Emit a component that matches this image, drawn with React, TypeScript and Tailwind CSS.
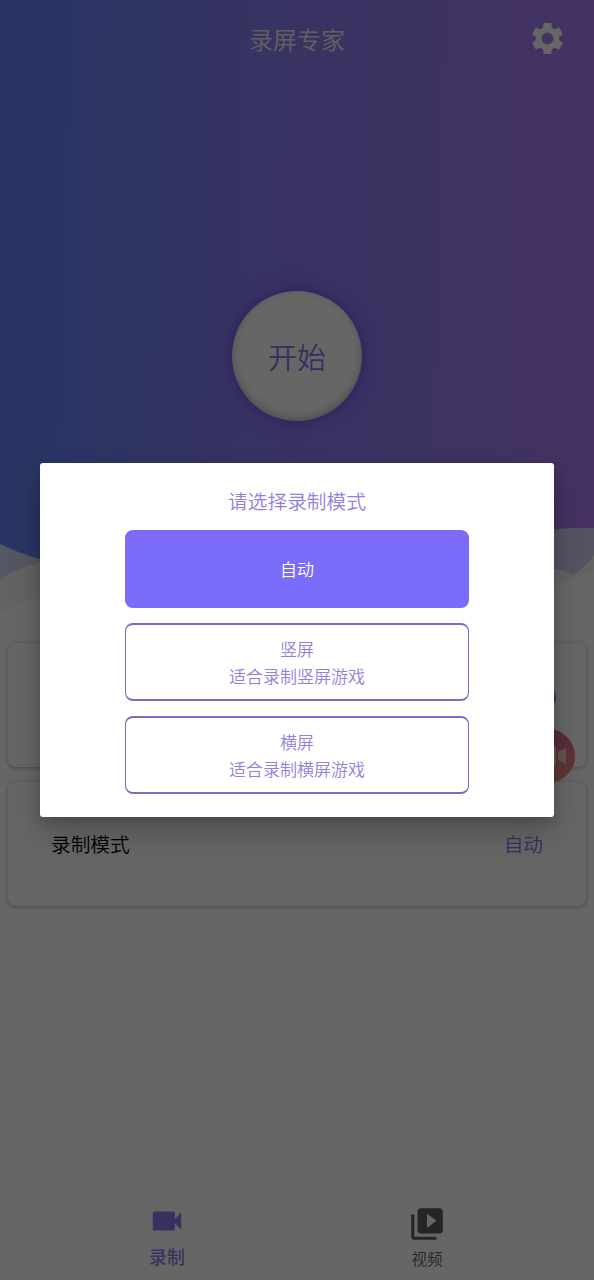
import type { ReactNode } from 'react';
import { MdSettings, MdVideocam, MdVideoLibrary } from 'react-icons/md';
import clsx from 'clsx';

interface Mode {
  id: string;
  title: string;
  hint?: string;
}

const modes: Mode[] = [
  { id: 'auto', title: '自动' },
  { id: 'portrait', title: '竖屏', hint: '适合录制竖屏游戏' },
  { id: 'landscape', title: '横屏', hint: '适合录制横屏游戏' },
];

function Backdrop() {
  return (
    <svg className="absolute inset-x-0 top-0" width="594" height="640" viewBox="0 0 594 640">
      <defs>
        <linearGradient id="sky" gradientUnits="userSpaceOnUse" x1="0" y1="0" x2="594" y2="16">
          <stop offset="0" stopColor="#6886f8" />
          <stop offset="0.2" stopColor="#7084f8" />
          <stop offset="0.42" stopColor="#8980f8" />
          <stop offset="0.7" stopColor="#977ff6" />
          <stop offset="1" stopColor="#ac7ef6" />
        </linearGradient>
        <linearGradient id="haze" x1="0" y1="0" x2="1" y2="0">
          <stop offset="0" stopColor="#cfd7f8" />
          <stop offset="1" stopColor="#d8cdf5" />
        </linearGradient>
      </defs>
      <path d="M0 544C22 554 40 559 70 562C200 575 420 528 594 528V600H0Z" fill="url(#haze)" />
      <path d="M0 0H594V528C555 527 520 533 480 540C300 575 120 580 40 559Q18 553 0 544Z" fill="url(#sky)" />
      <path d="M0 578Q20 568 40 562C120 540 500 545 555 569Q565 570 573 575Q586 567 594 555V640H0Z" fill="#f4f4f8" />
      <path d="M0 612Q20 602 40 598C200 560 480 610 555 584Q575 578 594 570V640H0Z" fill="#ffffff" />
    </svg>
  );
}

function Card({ label, value, className }: { label: string; value: string; className?: string }) {
  return (
    <div
      className={clsx(
        'mx-2 flex h-[124px] items-center justify-between rounded-lg bg-white pl-[43px] text-[19.7px] shadow-[0_1px_4px_rgba(0,0,0,0.3)]',
        className,
      )}
    >
      <span className="text-black">{label}</span>
      <span className="text-[#8a74ee]">{value}</span>
    </div>
  );
}

function Tab({ icon, label, active }: { icon: ReactNode; label: string; active?: boolean }) {
  return (
    <div
      className={clsx(
        'flex w-[260px] flex-col items-center',
        active ? 'pt-[9px] text-[#957bf0]' : 'pt-3 text-[#5c5c5c]',
      )}
    >
      {icon}
      <span className={clsx('whitespace-nowrap', active ? 'text-lg leading-[33px] font-medium' : 'text-[15.5px] leading-[30px]')}>
        {label}
      </span>
    </div>
  );
}

function ModeButton({ mode, selected }: { mode: Mode; selected: boolean }) {
  return (
    <button
      className={clsx(
        'flex h-[78px] w-[344px] flex-col items-center justify-center rounded-lg border-x-[1.5px] border-y-2 text-[17px] leading-[26px]',
        selected ? 'border-[#7a6bf8] bg-[#7a6bf8] text-white' : 'border-[#7b69cb] bg-white text-[#947fdd]',
      )}
    >
      <span>{mode.title}</span>
      {mode.hint && <span className="-mb-px pt-px">{mode.hint}</span>}
    </button>
  );
}

export default function App() {
  return (
    <div className="relative flex h-[1280px] w-[594px] flex-col overflow-hidden bg-white font-['Noto_Sans_CJK_SC',sans-serif] font-[350]">
      <Backdrop />

      <header className="relative grid h-20 grid-cols-[1fr_auto_1fr] items-center">
        <h1 className="col-start-2 pb-[3px] text-[24px] text-[#f0f0f0]">录屏专家</h1>
        <MdSettings className="mt-[-3px] mr-[27px] size-[39px] justify-self-end text-white" />
      </header>

      <div className="relative flex h-[563px] justify-center pt-[210.5px]">
        <button className="flex size-[130px] items-center justify-center rounded-full bg-white pt-[2px] text-[29px] text-[#8a74f0] shadow-[0_0_8px_2px_rgba(90,50,220,0.4),0_0_26px_12px_rgba(120,80,240,0.2),inset_0_-3px_8px_rgba(0,0,0,0.25)]">
          开始
        </button>
      </div>

      <main className="relative flex flex-1 flex-col gap-[15px]">
        <Card label="录制质量" value="高清 HD" className="pr-[29px] pb-4" />
        <Card label="录制模式" value="自动" className="pr-[43px]" />
      </main>

      <nav className="relative flex h-[88px] justify-center border-t border-[#f8f8f8]">
        <Tab icon={<MdVideocam className="size-[38px]" />} label="录制" active />
        <Tab icon={<MdVideoLibrary className="size-[38px]" />} label="视频" />
      </nav>

      {/* floating record button */}
      <div className="absolute top-[729px] left-[521px] flex size-[54px] items-center justify-center rounded-full bg-linear-to-b from-[#d9688f] to-[#f2947c]">
        <svg width="36" height="24" viewBox="0 0 36 24" fill="#f0d4d4">
          <rect x="1" y="2" width="25" height="20" rx="3" />
          <path d="M28 8L36 4V20L28 16Z" />
        </svg>
      </div>

      <div className="absolute inset-0 bg-black/60" />

      <section className="absolute top-[463px] left-10 flex h-[354px] w-[514px] flex-col items-center rounded-[3px] bg-white pt-[23px] shadow-[0_16px_30px_rgba(0,0,0,0.22),0_3px_12px_rgba(0,0,0,0.12)]">
        <h2 className="mb-[14px] text-[19.7px] leading-[30px] text-[#947fdd]">请选择录制模式</h2>
        <div className="flex flex-col gap-[15px]">
          {modes.map((mode) => (
            <ModeButton key={mode.id} mode={mode} selected={mode.id === 'auto'} />
          ))}
        </div>
      </section>
    </div>
  );
}
